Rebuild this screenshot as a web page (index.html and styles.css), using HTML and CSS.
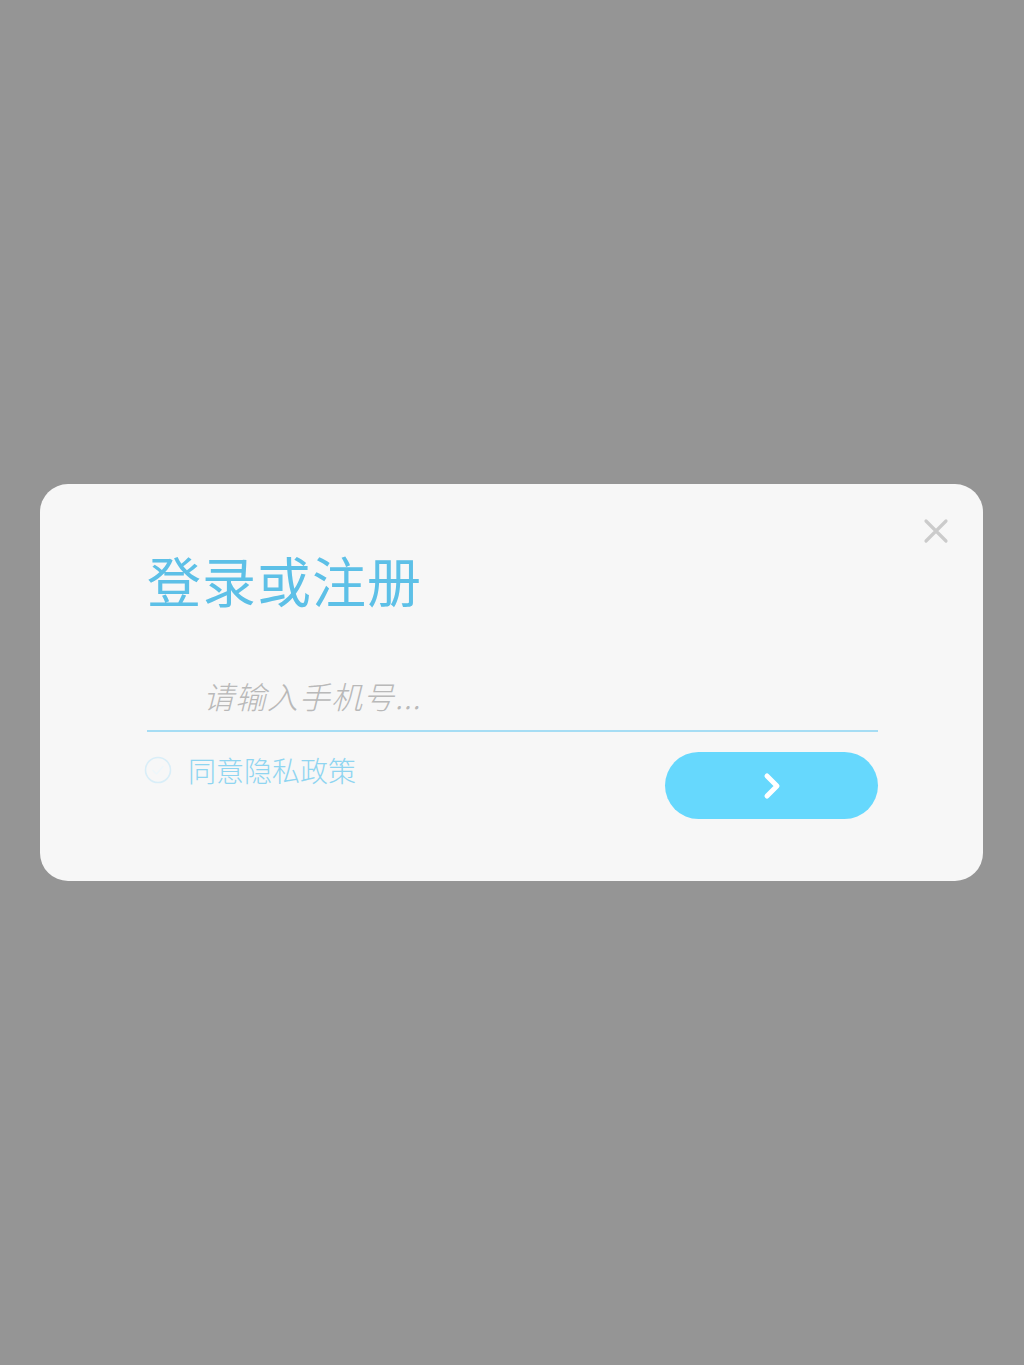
FILE: index.html
```html
<!DOCTYPE html>
<html lang="zh">
<head>
<meta charset="utf-8">
<title>登录或注册</title>
<link rel="stylesheet" href="styles.css">
</head>
<body>
<div class="screen">
  <div class="card">
    <button class="close" aria-label="关闭">
      <svg width="26" height="26" viewBox="0 0 26 26"><path d="M3 3 L23 23 M23 3 L3 23" stroke="#cbcbcb" stroke-width="3.2" stroke-linecap="round"/></svg>
    </button>
    <h1 class="title">登录或注册</h1>
    <div class="field">
      <span class="placeholder">请输入手机号...</span>
    </div>
    <div class="bottom">
      <label class="agree">
        <span class="check">
          <svg width="28" height="28" viewBox="0 0 28 28"><circle cx="14" cy="14" r="12.5" fill="none" stroke="#d9eef8" stroke-width="1.6"/><path d="M9 14.5 L12.5 18 L19 10.5" fill="none" stroke="#eef7fb" stroke-width="1.4" stroke-linecap="round" stroke-linejoin="round"/></svg>
        </span>
        <span class="agree-text">同意隐私政策</span>
      </label>
      <button class="go" aria-label="下一步">
        <svg width="22" height="30" viewBox="0 0 22 30"><path d="M6 5 L16 15 L6 25" fill="none" stroke="#ffffff" stroke-width="5" stroke-linecap="round" stroke-linejoin="round"/></svg>
      </button>
    </div>
  </div>
</div>
</body>
</html>
```

FILE: styles.css
```css
html, body {
  margin: 0;
  padding: 0;
}
body {
  background: #959595;
  font-family: "Noto Sans CJK SC", "Noto Sans", sans-serif;
}
.screen {
  height: 1365px;
  display: flex;
  align-items: center;
  justify-content: center;
}
.card {
  position: relative;
  box-sizing: border-box;
  width: 943px;
  height: 397px;
  margin-left: -1px;
  background: #f7f7f7;
  border-radius: 28px;
  padding: 60px 105px 0 107px;
  display: flex;
  flex-direction: column;
}
.close {
  position: absolute;
  top: 34px;
  right: 34px;
  width: 26px;
  height: 26px;
  padding: 0;
  border: 0;
  background: none;
  display: flex;
}
.title {
  margin: 0;
  font-size: 54px;
  line-height: 72px;
  font-weight: 400;
  color: #5dc0e7;
  letter-spacing: 1px;
}
.field {
  margin-top: 44px;
  height: 70px;
  border-bottom: 2px solid #a6ddf4;
  padding-left: 56px;
  display: flex;
  align-items: center;
}
.placeholder {
  font-size: 31px;
  font-weight: 300;
  color: #b9b9b9;
  font-style: italic;
  letter-spacing: 1px;
}
.bottom {
  margin-top: 20px;
  display: flex;
  justify-content: space-between;
  align-items: flex-start;
}
.agree {
  display: flex;
  align-items: center;
  gap: 16px;
  margin-left: -3px;
  margin-top: 2px;
}
.check {
  display: flex;
  width: 28px;
  height: 28px;
}
.agree-text {
  font-size: 28px;
  font-weight: 300;
  line-height: 32px;
  color: #8fd5f1;
}
.go {
  width: 213px;
  height: 67px;
  border: 0;
  border-radius: 34px;
  background: #66d8fd;
  display: flex;
  align-items: center;
  justify-content: center;
  padding: 0;
}
```
